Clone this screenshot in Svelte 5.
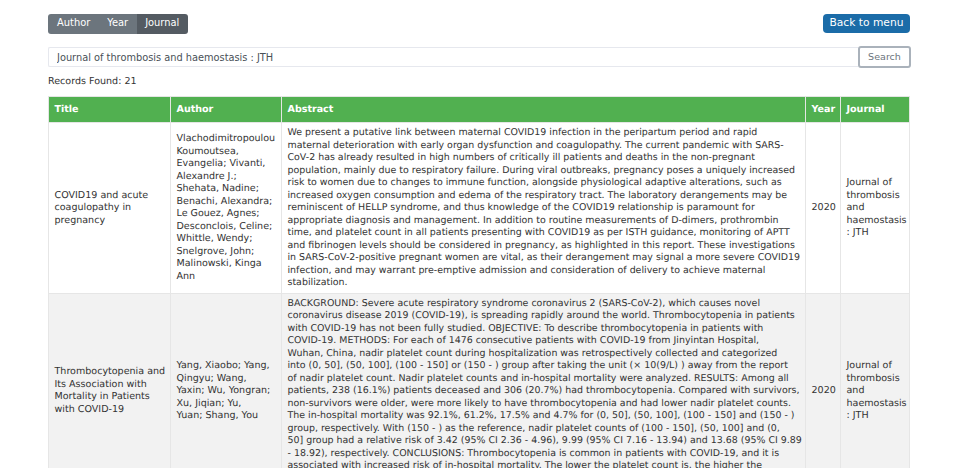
<script>
  const columns = ['Title', 'Author', 'Abstract', 'Year', 'Journal'];
  const journal = 'Journal of thrombosis and haemostasis : JTH';

  // abstracts are kept line by line so they break where the source table does
  const records = [
    {
      title: 'COVID19 and acute coagulopathy in pregnancy',
      author: 'Vlachodimitropoulou Koumoutsea, Evangelia; Vivanti, Alexandre J.; Shehata, Nadine; Benachi, Alexandra; Le Gouez, Agnes; Desconclois, Celine; Whittle, Wendy; Snelgrove, John; Malinowski, Kinga Ann',
      abstract: [
        'We present a putative link between maternal COVID19 infection in the peripartum period and rapid',
        'maternal deterioration with early organ dysfunction and coagulopathy. The current pandemic with SARS-',
        'CoV-2 has already resulted in high numbers of critically ill patients and deaths in the non-pregnant',
        'population, mainly due to respiratory failure. During viral outbreaks, pregnancy poses a uniquely increased',
        'risk to women due to changes to immune function, alongside physiological adaptive alterations, such as',
        'increased oxygen consumption and edema of the respiratory tract. The laboratory derangements may be',
        'reminiscent of HELLP syndrome, and thus knowledge of the COVID19 relationship is paramount for',
        'appropriate diagnosis and management. In addition to routine measurements of D-dimers, prothrombin',
        'time, and platelet count in all patients presenting with COVID19 as per ISTH guidance, monitoring of APTT',
        'and fibrinogen levels should be considered in pregnancy, as highlighted in this report. These investigations',
        'in SARS-CoV-2-positive pregnant women are vital, as their derangement may signal a more severe COVID19',
        'infection, and may warrant pre-emptive admission and consideration of delivery to achieve maternal',
        'stabilization.'
      ],
      year: 2020
    },
    {
      title: 'Thrombocytopenia and Its Association with Mortality in Patients with COVID-19',
      author: 'Yang, Xiaobo; Yang, Qingyu; Wang, Yaxin; Wu, Yongran; Xu, Jiqian; Yu,\nYuan; Shang, You',
      abstract: [
        'BACKGROUND: Severe acute respiratory syndrome coronavirus 2 (SARS-CoV-2), which causes novel',
        'coronavirus disease 2019 (COVID-19), is spreading rapidly around the world. Thrombocytopenia in patients',
        'with COVID-19 has not been fully studied. OBJECTIVE: To describe thrombocytopenia in patients with',
        'COVID-19. METHODS: For each of 1476 consecutive patients with COVID-19 from Jinyintan Hospital,',
        'Wuhan, China, nadir platelet count during hospitalization was retrospectively collected and categorized',
        'into (0, 50], (50, 100], (100 - 150] or (150 - ) group after taking the unit (× 10(9/L) ) away from the report',
        'of nadir platelet count. Nadir platelet counts and in-hospital mortality were analyzed. RESULTS: Among all',
        'patients, 238 (16.1%) patients deceased and 306 (20.7%) had thrombocytopenia. Compared with survivors,',
        'non-survivors were older, were more likely to have thrombocytopenia and had lower nadir platelet counts.',
        'The in-hospital mortality was 92.1%, 61.2%, 17.5% and 4.7% for (0, 50], (50, 100], (100 - 150] and (150 - )',
        'group, respectively. With (150 - ) as the reference, nadir platelet counts of (100 - 150], (50, 100] and (0,',
        '50] group had a relative risk of 3.42 (95% CI 2.36 - 4.96), 9.99 (95% CI 7.16 - 13.94) and 13.68 (95% CI 9.89',
        '- 18.92), respectively. CONCLUSIONS: Thrombocytopenia is common in patients with COVID-19, and it is',
        'associated with increased risk of in-hospital mortality. The lower the platelet count is, the higher the',
        'mortality becomes.'
      ],
      year: 2020
    }
  ];
</script>

<div class="page">
  <div class="toolbar">
    <div class="btn-group">
      <button class="seg">Author</button>
      <button class="seg">Year</button>
      <button class="seg active">Journal</button>
    </div>
    <button class="back">Back to menu</button>
  </div>

  <div class="search-row">
    <input class="search-input" type="text" value={journal} />
    <button class="search-btn">Search</button>
  </div>

  <p class="found">Records Found: 21</p>

  <table>
    <colgroup>
      <col class="c-title" />
      <col class="c-author" />
      <col />
      <col class="c-year" />
      <col class="c-journal" />
    </colgroup>
    <thead>
      <tr>
        {#each columns as col}
          <th>{col}</th>
        {/each}
      </tr>
    </thead>
    <tbody>
      {#each records as rec}
        <tr>
          <td class="tight">{rec.title}</td>
          <td class="author">{rec.author}</td>
          <td class="abstract">{rec.abstract.join('\n')}</td>
          <td>{rec.year}</td>
          <td>{journal}</td>
        </tr>
      {/each}
    </tbody>
  </table>
</div>

<style>
  :global(html), :global(body) {
    overflow: hidden;
    background: #fff;
  }

  .page {
    padding: 13px 46px 0 48px;
    font-family: "DejaVu Sans", Verdana, sans-serif;
    font-size: 9.55px;
    line-height: 12.5px;
    color: #333;
    text-rendering: geometricPrecision;
  }

  .toolbar {
    display: flex;
    justify-content: space-between;
    align-items: center;
    height: 21px;
  }

  .btn-group {
    display: flex;
    height: 20px;
    border-radius: 3px;
    overflow: hidden;
  }

  .seg {
    border: 0;
    margin: 0;
    padding: 0 9px;
    background: #6c757d;
    color: #fff;
    font: inherit;
    font-size: 9.9px;
  }

  .seg + .seg {
    padding-left: 8px;
  }

  .seg.active {
    background: #545b62;
  }

  .back {
    height: 19px;
    padding: 0 6.5px;
    border: 0;
    border-radius: 4px;
    background: #1b6ca8;
    color: #fff;
    font: inherit;
    font-size: 10.7px;
  }

  .search-row {
    display: flex;
    align-items: center;
    height: 20px;
    margin-top: 13px;
  }

  .search-input {
    flex: 1;
    min-width: 0;
    box-sizing: border-box;
    height: 20px;
    padding: 0 8px;
    border: 1px solid #e6e8ee;
    border-right: 0;
    border-radius: 2px 0 0 2px;
    background: #fff;
    color: #495057;
    font: inherit;
    font-size: 9.8px;
    outline: none;
  }

  .search-btn {
    box-sizing: border-box;
    width: 49px;
    height: 18px;
    margin: 0 1px 0 2px;
    padding: 0;
    border: 0;
    outline: 2px solid #aab2bb;
    border-radius: 1px;
    background: #fff;
    color: #6c757d;
    font: inherit;
  }

  .found {
    margin: 9px 0 0;
    height: 20px;
  }

  table {
    width: 862px;
    table-layout: fixed;
    border-collapse: collapse;
  }

  .c-title { width: 122px; }
  .c-author { width: 111px; }
  .c-year { width: 35px; }
  .c-journal { width: 69px; }

  th {
    height: 24px;
    padding: 1px 5.5px 0;
    border: 1px solid #e4e6e4;
    background: #51b050;
    color: #fff;
    font-weight: 700;
    text-align: left;
  }

  td {
    padding: 4px 5.5px 3px;
    border: 1px solid #e6e6e6;
    overflow-wrap: normal;
    vertical-align: middle;
  }

  td.tight {
    padding-right: 2px;
  }

  td.author {
    white-space: pre-line;
  }

  td.abstract {
    white-space: pre;
    padding-right: 2px;
    font-size: 9.45px;
  }

  tbody tr:nth-child(even) td {
    background: #f2f2f2;
  }
</style>
